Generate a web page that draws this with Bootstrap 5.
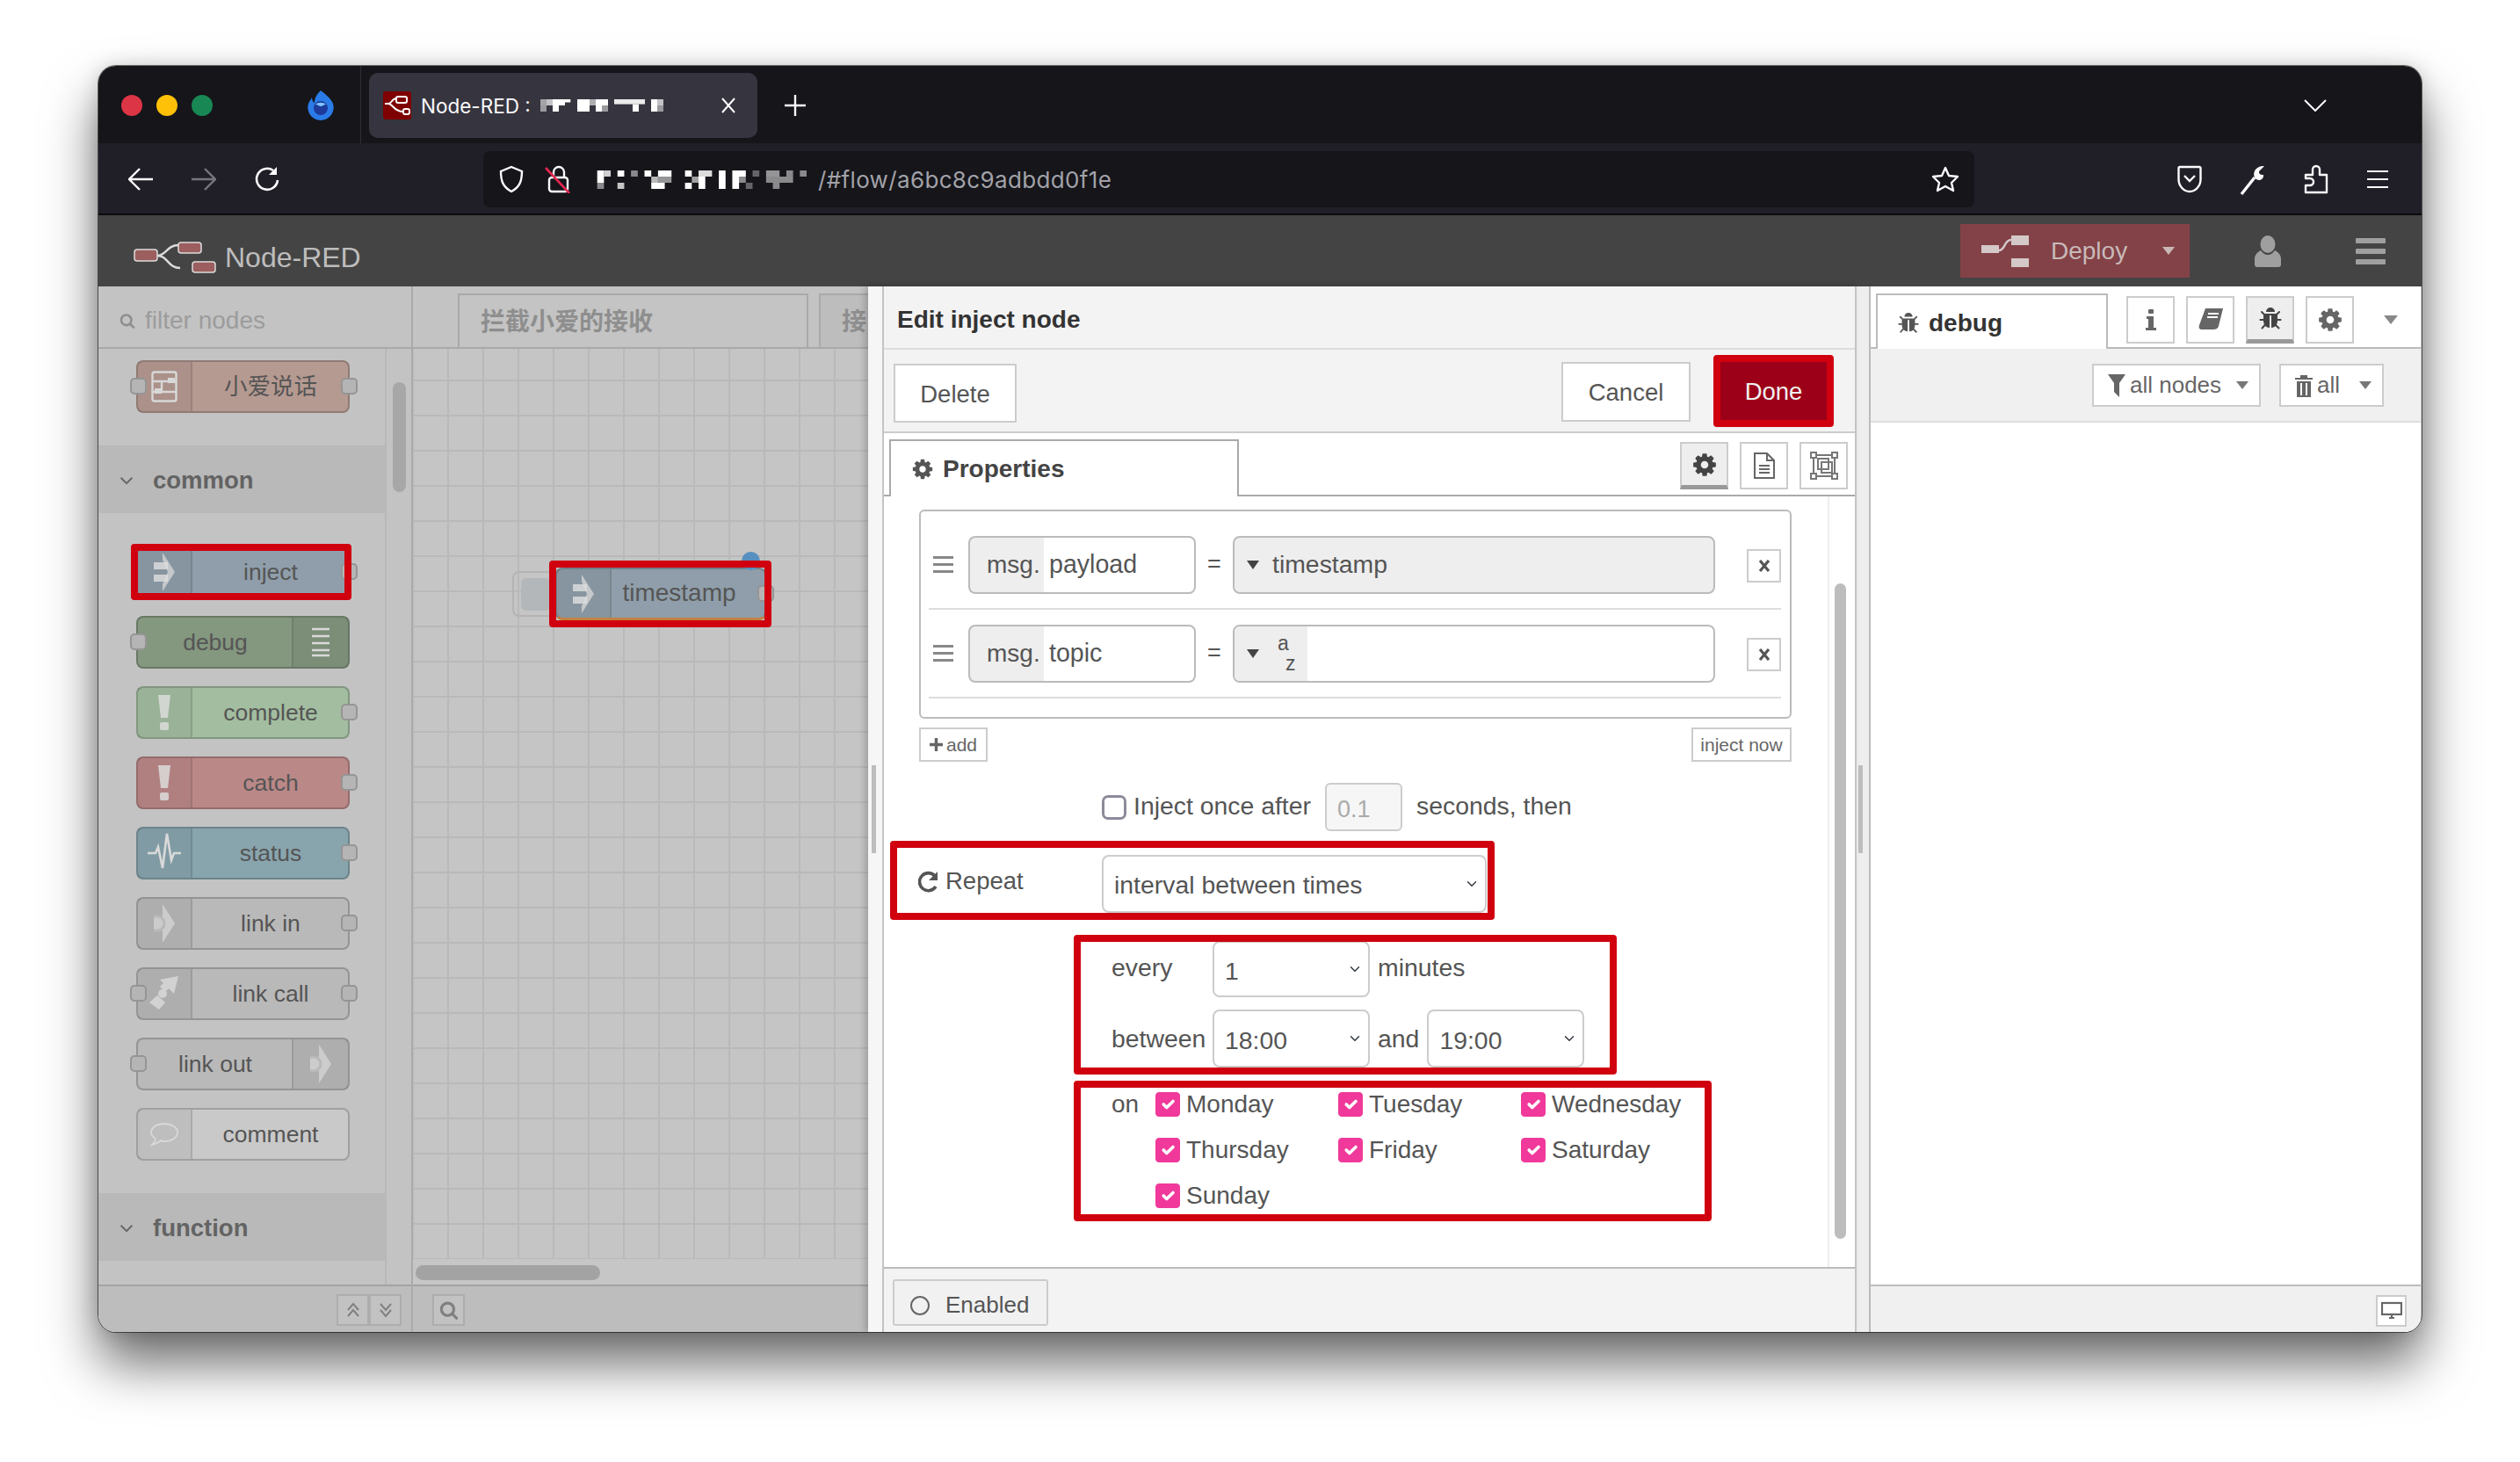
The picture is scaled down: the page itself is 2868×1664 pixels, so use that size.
<!DOCTYPE html>
<html lang="en">
<head>
<meta charset="utf-8">
<title>Node-RED</title>
<link rel="stylesheet" href="https://cdn.jsdelivr.net/npm/bootstrap@5.3.0/dist/css/bootstrap.min.css">
<script src="https://cdn.jsdelivr.net/npm/bootstrap@5.3.0/dist/js/bootstrap.bundle.min.js"></script>
<style>
html,body{height:1664px;overflow:hidden;background:#fff;margin:0}
body{font-family:"Liberation Sans",Arial,"Noto Sans CJK SC",sans-serif;color:#555}
svg{display:block;flex:none}
.fx-win{margin:75px 0 0 112px;width:2644px;height:1441px;border-radius:20px;overflow:hidden;box-shadow:0 0 0 1px rgba(0,0,0,.55),0 36px 60px rgba(0,0,0,.58),0 0 22px rgba(0,0,0,.16);background:#ccc}
.fx-tabbar{height:88px;background:#15151a;padding-top:2px;flex:none}
.fx-lights{padding-left:26px;gap:16px;width:238px}
.fx-light{width:24px;height:24px;border-radius:50%}
.fx-ff{margin-right:30px}
.fx-divider{width:1px;height:88px;background:#2e2e34;margin-right:9px;margin-top:-2px}
.fx-tab{width:442px;height:74px;margin-top:6px;align-self:flex-start;background:#36353f;border-radius:10px;color:#fbfbfe;font:22.5px Inter,"Liberation Sans",sans-serif;padding:0 24px 0 16px;gap:11px}
.fx-fav{width:32px;height:32px;background:#7e0000;border-radius:3px}
.fx-plus{margin-left:30px}
.fx-endpad{width:108px;flex:none}
.fx-toolbar{height:82px;background:#201f28;border-bottom:2px solid #0b0b0d;padding-top:2px;flex:none}
.fx-navs{width:438px;padding-left:34px;gap:44px}
.fx-url{width:1697px;height:64px;background:#15151a;border-radius:8px;padding:0 17px 0 18px;font:26px Inter,"Liberation Sans",sans-serif;color:#a2a2a8}
.fx-shield{margin-right:24px}
.fx-mosu{margin-left:22px}
.fx-urltxt{margin-left:13px;letter-spacing:.35px}
.fx-tools{gap:43px;padding-left:231px}
.nr-head{height:81px;background:#444;color:#bdbdbd;flex:none}
.nr-brand{font-size:32px;gap:10px;padding-left:40px;margin-top:15px}
.nr-deploy{width:261px;height:61px;background:#834247;color:#c8b9b9;font-size:28px;padding-left:24px}
.nr-deploy-txt{margin-left:25px}
.nr-user{margin-left:74px;margin-right:85px}
.nr-menu{margin-right:41px}
.nr-main{height:1190px;flex:none}
.nr-pal{width:358px;background:#c3c3c3;border-right:2px solid #aaa;flex:none}
.nr-filter{height:71px;border-bottom:2px solid #a9a9a9;padding:9px 0 0 24px;gap:11px;font-size:28px;color:#9c9c9c;flex:none}
.nr-filter svg{color:#8f8f8f}
.nr-palbody{height:1065px;flex:none}
.nr-pallist{width:328px;border-right:2px solid #b8b8b8;padding-top:13px;flex:none}
.nr-saywrap{padding-left:43px;margin-bottom:37px}
.nr-paltrack{flex:1;padding:38px 0 0 7px}
.nr-thumb{width:15px;height:125px;background:#a7a7a7;border-radius:8px}
.nr-palhead{height:77px;background:#b9b9b9;font-weight:700;font-size:27.5px;color:#636363;padding:3px 0 0 24px;gap:22px}
.nr-palhead svg{color:#666}
.nr-palgrp{padding:37px 0 37px 43px}
.nr-foot{height:54px;flex:none;border-top:2px solid #a3a3a3;background:#bdbdbd;padding-top:9px}
.nr-pf{padding-right:11px}
.nr-wf{padding-left:22px}
.nr-fbtn{width:37px;height:36px;border:2px solid #adadad;background:#c2c2c2;color:#808080}
.nr-node{position:relative;width:243px;height:60px;border-radius:8px;border:2px solid rgba(0,0,0,.2);font-size:26.5px;color:#555;line-height:1}
.nr-palgrp .nr-node{margin-bottom:20px}
.nr-palgrp .nr-node:last-child{margin-bottom:0}
.nr-ico{width:62px;background:rgba(0,0,0,.055);border-right:2px solid rgba(0,0,0,.1);color:rgba(222,222,222,.82);flex:none}
.nr-ico-r{width:64px;border-right:0;border-left:2px solid rgba(0,0,0,.1)}
.nr-lbl{flex:1;text-align:center;padding:1px 0 0 1px}
.nr-port{position:absolute;width:19px;height:19px;top:18px;background:#b5b5b5;border:2px solid #959595;border-radius:5px}
.nr-port-r{right:-11px}
.nr-port-l{left:-9px}
.c-say{background:#b59a91}
.c-inj{background:#8f9eaa}
.c-dbg{background:#84977f}
.c-cmp{background:#a3bda0}
.c-cat{background:#bb8888}
.c-sta{background:#88a5ae}
.c-lnk{background:#b9b9b9}
.c-com{background:#c9c9c9}
.nr-hl{position:absolute;border:8px solid #d0000f;border-radius:4px;z-index:3}
.nr-hl-inj{left:-8px;right:-4px;top:-4px;bottom:-4px}
.nr-ws{width:518px;background:#c3c3c3;flex:none}
.nr-wstabs{height:71px;flex:none;border-bottom:2px solid #a9a9a9;padding-left:51px;overflow:hidden;gap:12px;font-size:28px;font-weight:700;color:#8e8e8e}
.nr-wstab{height:63px;margin-top:8px;width:399px;border:2px solid #a9a9a9;border-bottom:0;padding:0 0 0 24px;background:#c4c4c4;flex:none;white-space:nowrap}
.nr-wstab2{width:70px;background:#bdbdbd}
.nr-canvas{height:1036px;position:relative;background-color:#c5c5c5;background-image:linear-gradient(90deg,#b9b9b9 2px,transparent 2px),linear-gradient(#b9b9b9 2px,transparent 2px);background-size:40px 40px;background-position:-1px 35px;flex:none}
.nr-wsnode{position:absolute;left:162px;top:249px;width:240px;border-bottom:3px solid #c5803f}
.nr-wslbl{padding:0 20px 2px 0;font-size:28px}
.nr-hl-ws{left:-9px;right:-8px;top:-10px;bottom:-11px}
.nr-injbtn{position:absolute;left:-51px;top:2px;width:46px;height:52px;border:2px solid #b4b4b4;border-right:0;border-radius:8px 0 0 8px;padding:6px 0 0 8px}
.nr-injbtn i{display:block;width:34px;height:37px;border-radius:6px;background:#b3b7ba}
.nr-dot{position:absolute;left:210px;top:-20px;width:21px;height:21px;border-radius:50%;background:#5790bf}
.nr-hbar{height:29px;flex:none;background:#c6c6c6;padding:7px 0 0 3px}
.nr-hthumb{width:210px;height:17px;border-radius:9px;background:#a3a3a3}
.nr-tray{width:1123px;background:#f6f6f6;box-shadow:-3px 0 8px rgba(0,0,0,.22);position:relative;flex:none}
.nr-strip{width:16px;flex:none}
.nr-grip{width:5px;height:100px;background:#bdbdbd;margin-left:4px}
.nr-traybody{flex:1;min-width:0;border-left:2px solid #c4c4c4;background:#fff}
.nr-title{height:72px;background:#f3f3f3;border-bottom:2px solid #ddd;font-size:28px;font-weight:700;color:#333;padding:5px 0 0 15px;flex:none}
.nr-actions{height:95px;background:#f3f3f3;border-bottom:2px solid #ccc;padding:0 24px 0 11px;flex:none}
.nr-btn{border:2px solid #ccc;border-radius:0;background:#fff;color:#555;font-size:27.5px;padding:2px 0 0;display:flex;align-items:center;justify-content:center}
.nr-del{width:140px;height:67px;margin-top:6px}
.nr-can{width:147px;height:68px;margin-right:26px;margin-top:3px}
.nr-done{width:137px;height:82px;background:#9c0018;border:8px solid #d0000f;border-radius:4px;color:#f1f1f1}
.nr-edtabs{height:72px;border-bottom:2px solid #aaa;flex:none;padding-right:8px}
.nr-edtab{width:398px;height:65px;margin:7px 0 -2px 6px;border:2px solid #aaa;border-bottom:0;background:#fff;font-size:28px;font-weight:700;color:#444;padding-left:23px;gap:10px}
.nr-edtab svg{color:#555}
.nr-ibtns{gap:13px;margin-top:10px;align-self:flex-start}
.nr-ibtn{width:55px;height:54px;border:2px solid #ccc;background:#fff;color:#666}
.nr-ibtn-on{background:#eee;border-bottom:5px solid #999;color:#444}
.nr-content{height:877px;flex:none}
.nr-form{width:1074px;padding:15px 0 0 40px;flex:none;font-size:28.4px}
.nr-sb{flex:1;border-left:2px solid #eee;padding:99px 0 0 6px}
.nr-sbthumb{width:13px;height:746px;background:#bdbdbd;border-radius:7px}
.nr-list{width:993px;height:238px;border:2px solid #bbb;border-radius:6px;padding-top:11px}
.nr-prow{height:101px;margin:0 10px 0 9px;border-bottom:2px solid #ddd;padding-left:5px}
.nr-hand{width:23px;margin-right:17px;color:#888}
.nr-field{width:259px;height:66px;flex-wrap:nowrap}
.nr-field .input-group-text{width:87px;background:#eee;border:2px solid #bbb;border-right:0;border-radius:8px 0 0 8px;color:#555;font-size:28px;padding:0 0 0 19px}
.nr-field .form-control{border:2px solid #bbb;border-left:0;border-radius:0 8px 8px 0;font-size:28.6px;color:#555;padding:0 0 0 6px;box-shadow:none}
.nr-eq{width:42px;text-align:center;font-size:27px}
.nr-val{width:549px;height:66px;border:2px solid #bbb;border-radius:8px;background:#eee;overflow:hidden}
.nr-val-w{background:#fff}
.nr-caret{width:0;height:0;border-style:solid;border-width:10px 7px 0;border-color:#444 transparent transparent;margin:0 15px 0 14px;flex:none}
.nr-az{width:83px;height:100%;background:#eee;flex:none}
.nr-azt{font-size:23px;line-height:1;margin-left:6px;width:24px;height:46px;position:relative}
.nr-azt span{position:absolute}
.nr-azt span:first-child{left:0;top:0}
.nr-azt span:last-child{left:9px;bottom:0}
.nr-x{width:39px;height:38px;margin-left:36px;border:2px solid #ccc;color:#555;background:#fff;margin-top:3px}
.nr-addrow{width:993px;margin-top:10px}
.nr-small{height:39px;border:2px solid #ccc;background:#fff;font-size:21px;color:#666}
.nr-add{width:78px;gap:4px}
.nr-now{width:114px}
.nr-once{margin:24px 0 0 208px;height:55px}
.nr-once>span:not(.nr-num){margin-top:-2px}
.nr-cb{width:28px;height:28px;margin:0 8px 0 0;border:3px solid #8b8b9b;border-radius:4px;flex:none}
.nr-num{width:88px;height:55px;margin:0 16px;background:#f6f6f6;border:2px solid #ccc;border-radius:6px;color:#aaa;font-size:27px;padding:8px 0 0 12px}
.nr-box{border:8px solid #d0000f;border-radius:4px}
.nr-box1{width:688px;height:90px;margin:11px 0 0 -33px;padding-left:24px}
.nr-rep{width:209px;gap:8px;margin-top:2px;font-size:27.5px}
.nr-sel{border:2px solid #ccc;border-radius:8px;font-size:28.4px;color:#555;padding:4px 24px 0 12px;background-position:right 8px center;background-size:14px 12px;box-shadow:none}
.nr-sel1{width:438px;height:66px;margin-top:7px}
.nr-box2{width:618px;height:159px;margin:17px 0 0 176px;padding-left:35px;overflow:hidden}
.nr-line1{height:64px;margin-top:-1px}
.nr-line1>span{margin-top:-3px}
.nr-line2{height:66px;margin-top:14px}
.nr-lab{width:115px}
.nr-sel2{width:179px;height:100%}
.nr-mid{margin:0 9px}
.nr-box3{width:726px;height:160px;margin:7px 0 0 176px;padding:2px 0 0 35px;font-size:28px}
.nr-daygrid{display:grid;grid-template-columns:50px 208px 208px 208px;grid-auto-rows:34px;row-gap:18px}
.nr-day{gap:7px}
.nr-day .form-check-input{width:28px;height:28px;margin:0;background-color:#f0399a;border-color:#f0399a;border-radius:4px;flex:none;background-size:24px}
.nr-edfoot{height:74px;flex:none;border-top:2px solid #bbb;background:#f3f3f3;padding:12px 0 0 10px}
.nr-en{width:177px;height:53px;border:2px solid #ccc;border-radius:3px;background:#f1f1f1;font-size:26px;color:#555;gap:18px;padding:6px 0 0 18px}
.nr-ring{width:22px;height:22px;border-radius:50%;border:2px solid #666;flex:none}
.nr-sep{width:16px;background:#eee;border-left:2px solid #ccc;flex:none}
.nr-sep .nr-grip{margin-left:2px}
.nr-side{width:628px;background:#fff;border-left:2px solid #bbb;flex:none}
.nr-sdtabs{height:71px;border-bottom:2px solid #bbb;padding-left:6px;flex:none}
.nr-sdtab{width:264px;height:65px;margin:8px 0 -2px 0;align-self:flex-start;border:2px solid #bbb;border-bottom:0;background:#fff;font-size:28px;font-weight:700;color:#333;padding-left:22px;gap:10px;flex:none}
.nr-sdtab svg{color:#555}
.nr-sdbtns{gap:13px;margin-left:21px;align-self:flex-start;margin-top:11px}
.nr-sdbar{height:84px;background:#f0f0f0;border-bottom:2px solid #ddd;padding:17px 42px 0 0;gap:21px;flex:none}
.nr-sdb{height:49px;border:2px solid #ccc;background:#fff;font-size:26px;color:#666;padding-left:16px;gap:5px}
.nr-sdb1{width:192px}
.nr-sdb2{width:119px}
.nr-tr{width:0;height:0;border-style:solid;border-width:9px 7px 0;border-color:#777 transparent transparent;margin-left:auto;margin-right:12px}
.nr-tr-dep{margin-right:17px;border-color:#c9b8b8 transparent transparent}
.nr-tr-sd{margin:0 0 0 21px;border-width:10px 8px 0;border-color:#888 transparent transparent}
.nr-sdbody{height:981px;flex:none;background:#fff}
.nr-sdfoot{height:54px;flex:none;border-top:2px solid #bbb;background:#f0f0f0;padding:10px 16px 0 0}
.nr-sdmon{width:35px;height:36px;border:2px solid #ccc;background:#fff;color:#666}
.nr-defs{position:absolute}
</style>
</head>
<body>
<svg width="0" height="0" class="nr-defs">
<defs>
<symbol id="i-gear" viewBox="0 0 1792 1792"><path fill="currentColor" d="M1152 896q0-106-75-181t-181-75-181 75-75 181 75 181 181 75 181-75 75-181zm512-109v222q0 12-8 23t-20 13l-185 28q-19 54-39 91 35 50 107 138 10 12 10 25t-9 23q-27 37-99 108t-94 71q-12 0-26-9l-138-108q-44 23-91 38-16 136-29 186-7 28-36 28h-222q-14 0-24.5-8.5t-11.5-21.5l-28-184q-49-16-90-37l-141 107q-10 9-25 9-14 0-25-11-126-114-165-168-7-10-7-23 0-12 8-23 15-21 51-66.5t54-70.5q-27-50-41-99l-183-27q-13-2-21-12.5t-8-23.5v-222q0-12 8-23t19-13l186-28q14-46 39-92-40-57-107-138-10-12-10-24 0-10 9-23 26-36 98.5-107.5t94.5-71.5q13 0 26 10l138 107q44-23 91-38 16-136 29-186 7-28 36-28h222q14 0 24.5 8.5t11.5 21.5l28 184q49 16 90 37l142-107q9-9 24-9 13 0 25 10 129 119 165 170 7 8 7 22 0 12-8 23-15 21-51 66.5t-54 70.5q26 50 41 98l183 28q13 2 21 12.5t8 23.5z"/></symbol>
<symbol id="i-bug" viewBox="0 0 1792 1792"><path fill="currentColor" d="M1696 960q0 26-19 45t-45 19h-224q0 171-67 290l208 209q19 19 19 45t-19 45q-18 19-45 19t-45-19l-198-197q-5 5-15 13t-42 28.5-65 36.5-82 29-97 13v-896h-128v896q-51 0-101.5-13.5t-87-33-66-39-43.5-32.5l-15-14-183 207q-20 21-48 21-24 0-43-16-19-18-20.5-44.5t15.5-46.5l202-227q-58-114-58-274h-224q-26 0-45-19t-19-45 19-45 45-19h224v-294l-173-173q-19-19-19-45t19-45 45-19 45 19l173 173h844l173-173q19-19 45-19t45 19 19 45-19 45l-173 173v294h224q26 0 45 19t19 45zm-480-576h-640q0-133 93.5-226.5t226.5-93.5 226.5 93.5 93.5 226.5z"/></symbol>
<symbol id="i-search" viewBox="0 0 1792 1792"><path fill="currentColor" d="M1216 832q0-185-131.5-316.5t-316.5-131.5-316.5 131.5-131.5 316.5 131.5 316.5 316.5 131.5 316.5-131.5 131.5-316.5zm512 832q0 52-38 90t-90 38q-54 0-90-38l-343-342q-179 124-399 124-143 0-273.5-55.5t-225-150-150-225-55.5-273.5 55.5-273.5 150-225 225-150 273.5-55.5 273.5 55.5 225 150 150 225 55.5 273.5q0 220-124 399l343 343q37 37 37 90z"/></symbol>
<symbol id="i-inj" viewBox="0 0 24 44"><rect x="0" y="11" width="16" height="8" fill="currentColor"/><rect x="0" y="25" width="16" height="8" fill="currentColor"/><polygon points="10,0 24,22 10,44 10,36 16,22 10,8" fill="currentColor" opacity=".85"/></symbol>
<symbol id="i-link" viewBox="0 0 24 44"><polygon points="10,0 24,22 10,44 10,30 0,30 0,14 10,14" fill="currentColor" opacity=".75"/><path d="M0 14h4a8 8 0 0 1 0 16h-4" fill="none" stroke="#b9b9b9" stroke-width="3"/></symbol>
<symbol id="i-ex" viewBox="0 0 14 40"><polygon points="0,0 14,0 11,26 3,26" fill="currentColor"/><rect x="2" y="31" width="10" height="9" rx="2" fill="currentColor"/></symbol>
<symbol id="i-chev" viewBox="0 0 20 12"><polyline points="2,2 10,10 18,2" fill="none" stroke="currentColor" stroke-width="2.4"/></symbol>
</defs>
</svg>

<div class="fx-win d-flex flex-column">
  <!-- browser tab strip -->
  <div class="fx-tabbar d-flex align-items-center">
    <div class="fx-lights d-flex align-items-center">
      <span class="fx-light bg-danger"></span>
      <span class="fx-light bg-warning"></span>
      <span class="fx-light bg-success"></span>
    </div>
    <svg class="fx-ff" width="30" height="34" viewBox="0 0 30 34"><path d="M15 0c5 4 11 8 14 15 3 9-4 19-14 19S-2 24 1 15c1-3 3-5 4-7 0 3 1 5 3 6 0-6 3-10 7-14z" fill="#2a7be8"/><circle cx="15" cy="20" r="8" fill="#1d3a9a"/><path d="M9 16c3-3 9-3 12 0-3 0-4 2-6 2s-3-2-6-2z" fill="#7fc4ff"/></svg>
    <div class="fx-divider"></div>
    <div class="fx-tab d-flex align-items-center">
      <span class="fx-fav d-flex align-items-center justify-content-center">
        <svg width="30" height="24" viewBox="0 0 30 24" fill="none" stroke="#fff" stroke-width="2"><rect x="14" y="2" width="12" height="7" rx="2"/><rect x="22" y="16" width="7" height="6" rx="2"/><path d="M1 10h4c4 0 4-6 9-6M5 10c5 0 6 9 17 9"/></svg>
      </span>
      <span>Node-RED :</span>
      <svg width="140" height="14" viewBox="0 0 20 2" preserveAspectRatio="none">
        <g fill="#fff">
          <rect x="0" y="0" width="1" height="1" opacity=".55"/><rect x="1" y="0" width="1" height="1" opacity=".7"/><rect x="2" y="0" width="1" height="1"/><rect x="3" y="0" width="1" height="1"/><rect x="4" y="0" width=".9" height=".5"/>
          <rect x="6" y="0" width="2" height="2"/><rect x="8" y="0" width="1" height="1" opacity=".6"/><rect x="9" y="0" width="1" height="2"/><rect x="10" y="0" width="1" height="1"/><rect x="10" y="1" width="1" height="1" opacity=".5"/>
          <rect x="12" y="0" width="5" height=".8" opacity=".9"/><rect x="15" y=".8" width="1" height="1.2"/>
          <rect x="18" y="0" width="1" height="2"/><rect x="19" y="0" width="1" height="1" opacity=".7"/><rect x="19" y="1" width="1" height="1" opacity=".5"/>
          <rect x="0" y="1" width="1" height="1" opacity=".5"/><rect x="2" y="1" width="1" height="1"/>
        </g>
      </svg>
      <svg class="ms-auto" width="18" height="20" viewBox="0 0 18 20" fill="none" stroke="#fbfbfe" stroke-width="2"><path d="M2 2l14 16M16 2L2 18"/></svg>
    </div>
    <svg class="fx-plus" width="26" height="26" viewBox="0 0 26 26" stroke="#fbfbfe" stroke-width="2.4"><path d="M13 1v24M1 13h24"/></svg>
    <svg class="ms-auto" width="26" height="14" viewBox="0 0 26 14" fill="none" stroke="#fbfbfe" stroke-width="2"><path d="M1 1l12 12L25 1"/></svg>
    <span class="fx-endpad"></span>
  </div>

  <!-- browser toolbar -->
  <div class="fx-toolbar d-flex align-items-center">
    <div class="fx-navs d-flex align-items-center">
      <svg width="28" height="26" viewBox="0 0 28 26" fill="none" stroke="#fbfbfe" stroke-width="2.4"><path d="M13 1L1 13l12 12M1 13h27"/></svg>
      <svg width="28" height="26" viewBox="0 0 28 26" fill="none" stroke="#77767e" stroke-width="2.4"><path d="M15 1l12 12-12 12M27 13H0"/></svg>
      <svg width="28" height="30" viewBox="0 0 28 30" fill="none" stroke="#fbfbfe" stroke-width="2.6"><path d="M26 16a12 12 0 1 1-5-11"/><path d="M25 1v9h-9" fill="#fbfbfe" stroke="none"/></svg>
    </div>
    <div class="fx-url d-flex align-items-center">
      <svg class="fx-shield" width="28" height="32" viewBox="0 0 28 32" fill="none" stroke="#fbfbfe" stroke-width="2.4"><path d="M14 2l12 5c0 12-3 18-12 23C5 25 2 19 2 7z"/></svg>
      <svg width="30" height="32" viewBox="0 0 30 32" fill="none"><path d="M10 14V8a6 6 0 0 1 12 0v6" stroke="#fbfbfe" stroke-width="2.4"/><rect x="5" y="14" width="21" height="16" rx="3" stroke="#fbfbfe" stroke-width="2.4"/><path d="M1 3l27 29" stroke="#e22850" stroke-width="2.6"/></svg>
      <svg class="fx-mosu" width="246" height="21" viewBox="0 0 32 3" preserveAspectRatio="none">
        <g fill="#fff">
          <rect x="1" y="0" width="1" height="1"/><rect x="2" y="0" width="1" height="1" opacity=".8"/><rect x="4" y="0" width="1" height="1"/><rect x="6" y="0" width="1" height="1" opacity=".5"/><rect x="8" y="0" width="1" height="1"/><rect x="10" y="0" width="2" height="1"/><rect x="14" y="0" width="1" height="1"/><rect x="16" y="0" width="2" height="1" opacity=".85"/><rect x="19" y="0" width="1" height="1"/><rect x="21" y="0" width="2" height="1"/><rect x="24" y="0" width="1" height="1" opacity=".35"/><rect x="26" y="0" width="2" height="1" opacity=".55"/><rect x="29" y="0" width="1" height="1" opacity=".5"/><rect x="31" y="0" width="1" height="1" opacity=".5"/>
          <rect x="1" y="1" width="1" height="1"/><rect x="9" y="1" width="1" height="1" opacity=".7"/><rect x="10" y="1" width="2" height="1" opacity=".55"/><rect x="15" y="1" width="1" height="1" opacity=".6"/><rect x="16" y="1" width="1" height="1"/><rect x="19" y="1" width="1" height="1"/><rect x="21" y="1" width="1" height="1"/><rect x="22" y="1" width="1" height="1" opacity=".5"/><rect x="26" y="1" width="4" height="1" opacity=".5"/>
          <rect x="1" y="2" width="1" height="1" opacity=".5"/><rect x="4" y="2" width="1" height="1" opacity=".75"/><rect x="9" y="2" width="2" height="1"/><rect x="14" y="2" width="1" height="1"/><rect x="16" y="2" width="1" height="1"/><rect x="19" y="2" width="1" height="1"/><rect x="21" y="2" width="1" height="1"/><rect x="23" y="2" width="1" height="1" opacity=".35"/><rect x="27" y="2" width="1" height="1" opacity=".5"/>
        </g>
      </svg>
      <span class="fx-urltxt">/#flow/a6bc8c9adbdd0f1e</span>
      <svg class="ms-auto" width="32" height="30" viewBox="0 0 32 30" fill="none" stroke="#fbfbfe" stroke-width="2.4"><path d="M16 2l4 9 10 1-7 7 2 9-9-5-9 5 2-9-7-7 10-1z" stroke-linejoin="round"/></svg>
    </div>
    <div class="fx-tools d-flex align-items-center">
      <svg width="28" height="32" viewBox="0 0 28 32" fill="none" stroke="#fbfbfe" stroke-width="2.4"><path d="M3 2h22a1.500 1.500 0 0 1 1.500 1.500V16c0 8-6 14-12.500 14S1.500 24 1.500 16V3.500A1.500 1.500 0 0 1 3 2z"/><path d="M8 12l6 6 6-6"/></svg>
      <svg width="30" height="38" viewBox="0 0 30 38" fill="none" stroke="#fbfbfe" stroke-width="3.4"><path d="M2 36l15-19"/><path d="M17 17c-3-7 3-14 11-13l-6 6c0 3 1 4 5 4 1 5-6 9-10 3z" fill="#fbfbfe" stroke="none"/></svg>
      <svg width="28" height="34" viewBox="0 0 28 34" fill="none" stroke="#fbfbfe" stroke-width="2.4"><path d="M2 12h8V6a4 4 0 0 1 8 0v6h8v20H2v-8h5a4 4 0 0 0 0-8H2z" stroke-linejoin="round"/></svg>
      <svg width="26" height="22" viewBox="0 0 26 22" stroke="#fbfbfe" stroke-width="2.2"><path d="M1 2h24M1 11h24M1 20h24"/></svg>
    </div>
  </div>

  <!-- node-red header -->
  <div class="nr-head d-flex align-items-center">
    <div class="nr-brand d-flex align-items-center">
      <svg width="94" height="36" viewBox="0 0 94 36" fill="none"><path d="M27 16c10 0 11-12 24-12M27 16c12 0 12 14 26 14" stroke="#dcdcdc" stroke-width="2.4"/><rect x="1" y="9" width="26" height="13" rx="3" fill="#9c5e5e" stroke="#dcdcdc" stroke-width="1.500"/><rect x="51" y="1" width="26" height="12" rx="3" fill="#9c5e5e" stroke="#dcdcdc" stroke-width="1.500"/><rect x="67" y="23" width="26" height="12" rx="3" fill="#9c5e5e" stroke="#dcdcdc" stroke-width="1.500"/></svg>
      <span>Node-RED</span>
    </div>
    <div class="nr-deploy ms-auto d-flex align-items-center">
      <svg width="54" height="36" viewBox="0 0 54 36" fill="#d4c8c8"><rect x="0" y="11" width="20" height="9"/><rect x="34" y="0" width="20" height="11"/><rect x="34" y="26" width="20" height="10"/><path d="M20 17c7 0 6-12 14-12" fill="none" stroke="#d4c8c8" stroke-width="2.500"/></svg>
      <span class="nr-deploy-txt">Deploy</span>
      <span class="nr-tr nr-tr-dep"></span>
    </div>
    <svg class="nr-user" width="30" height="36" viewBox="0 0 30 36" fill="#9f9f9f"><ellipse cx="15" cy="10" rx="8.500" ry="10"/><path d="M7 17c-4 2-7 5-7 10v6a3 3 0 0 0 3 3h24a3 3 0 0 0 3-3v-6c0-5-3-8-7-10-2 3-5 5-8 5s-6-2-8-5z"/></svg>
    <svg class="nr-menu" width="34" height="30" viewBox="0 0 34 30" fill="#9f9f9f"><rect y="0" width="34" height="6" rx="1"/><rect y="12" width="34" height="6" rx="1"/><rect y="24" width="34" height="6" rx="1"/></svg>
  </div>

  <!-- main -->
  <div class="nr-main d-flex">
    <!-- palette -->
    <div class="nr-pal d-flex flex-column">
      <div class="nr-filter d-flex align-items-center">
        <svg width="18" height="18"><use href="#i-search"/></svg>
        <span>filter nodes</span>
      </div>
      <div class="nr-palbody d-flex">
        <div class="nr-pallist">
          <div class="nr-saywrap">
            <div class="nr-node d-flex align-items-center c-say">
              <div class="nr-ico h-100 d-flex align-items-center justify-content-center">
                <svg width="30" height="36" viewBox="0 0 30 36" fill="none" stroke="#d8d8d8" stroke-width="2.4"><rect x="1.500" y="1.500" width="27" height="33" rx="2"/><path d="M1.500 12h27M1.500 24h27M12 12v12"/><rect x="19" y="8" width="8" height="6" fill="#d8d8d8" stroke="none"/><rect x="4" y="20" width="8" height="6" fill="#d8d8d8" stroke="none"/></svg>
              </div>
              <div class="nr-lbl">小爱说话</div>
              <span class="nr-port nr-port-l"></span><span class="nr-port nr-port-r"></span>
            </div>
          </div>
          <div class="nr-palhead d-flex align-items-center">
            <svg width="16" height="10"><use href="#i-chev"/></svg><span>common</span>
          </div>
          <div class="nr-palgrp">
            <div class="nr-node d-flex align-items-center c-inj">
              <div class="nr-ico h-100 d-flex align-items-center justify-content-center"><svg width="24" height="44"><use href="#i-inj"/></svg></div>
              <div class="nr-lbl">inject</div>
              <span class="nr-port nr-port-r"></span>
              <span class="nr-hl nr-hl-inj"></span>
            </div>
            <div class="nr-node d-flex align-items-center c-dbg">
              <span class="nr-port nr-port-l"></span>
              <div class="nr-lbl">debug</div>
              <div class="nr-ico nr-ico-r h-100 d-flex align-items-center justify-content-center">
                <svg width="20" height="34" viewBox="0 0 20 34" stroke="#d9d9d9" stroke-width="2.400"><path d="M0 2h20M0 10h20M0 18h20M0 26h20M0 32h20"/></svg>
              </div>
            </div>
            <div class="nr-node d-flex align-items-center c-cmp">
              <div class="nr-ico h-100 d-flex align-items-center justify-content-center"><svg width="14" height="40"><use href="#i-ex"/></svg></div>
              <div class="nr-lbl">complete</div>
              <span class="nr-port nr-port-r"></span>
            </div>
            <div class="nr-node d-flex align-items-center c-cat">
              <div class="nr-ico h-100 d-flex align-items-center justify-content-center"><svg width="14" height="40"><use href="#i-ex"/></svg></div>
              <div class="nr-lbl">catch</div>
              <span class="nr-port nr-port-r"></span>
            </div>
            <div class="nr-node d-flex align-items-center c-sta">
              <div class="nr-ico h-100 d-flex align-items-center justify-content-center">
                <svg width="38" height="46" viewBox="0 0 38 46" fill="none" stroke="#d9d9d9" stroke-width="2.600"><path d="M0 23h9l3-7 5 24 5-39 5 30 3-8h8"/></svg>
              </div>
              <div class="nr-lbl">status</div>
              <span class="nr-port nr-port-r"></span>
            </div>
            <div class="nr-node d-flex align-items-center c-lnk">
              <div class="nr-ico h-100 d-flex align-items-center justify-content-center"><svg width="24" height="44"><use href="#i-link"/></svg></div>
              <div class="nr-lbl">link in</div>
              <span class="nr-port nr-port-r"></span>
            </div>
            <div class="nr-node d-flex align-items-center c-lnk">
              <span class="nr-port nr-port-l"></span>
              <div class="nr-ico h-100 d-flex align-items-center justify-content-center">
                <svg width="34" height="40" viewBox="0 0 34 40" fill="#d2d2d2"><polygon points="33,0 28,20 22,14 18,18 12,12 16,8 12,4"/><circle cx="15" cy="20" r="5"/><polygon points="0,30 9,22 18,30 11,38"/></svg>
              </div>
              <div class="nr-lbl">link call</div>
              <span class="nr-port nr-port-r"></span>
            </div>
            <div class="nr-node d-flex align-items-center c-lnk">
              <span class="nr-port nr-port-l"></span>
              <div class="nr-lbl">link out</div>
              <div class="nr-ico nr-ico-r h-100 d-flex align-items-center justify-content-center"><svg width="24" height="44"><use href="#i-link"/></svg></div>
            </div>
            <div class="nr-node d-flex align-items-center c-com">
              <div class="nr-ico h-100 d-flex align-items-center justify-content-center">
                <svg width="32" height="28" viewBox="0 0 32 28" fill="none" stroke="#d8d8d8" stroke-width="1.800"><path d="M16 2c8 0 15 4 15 10s-7 10-15 10c-2 0-3 0-4-1-3 3-6 4-10 5 2-2 4-4 4-7-3-2-5-4-5-7C1 6 8 2 16 2z"/></svg>
              </div>
              <div class="nr-lbl">comment</div>
            </div>
          </div>
          <div class="nr-palhead d-flex align-items-center">
            <svg width="16" height="10"><use href="#i-chev"/></svg><span>function</span>
          </div>
        </div>
        <div class="nr-paltrack"><div class="nr-thumb"></div></div>
      </div>
      <div class="nr-foot nr-pf d-flex align-items-start justify-content-end">
        <span class="nr-fbtn d-flex align-items-center justify-content-center"><svg width="16" height="20" viewBox="0 0 16 20" fill="none" stroke="currentColor" stroke-width="2"><path d="M2 10l6-7 6 7M2 17l6-7 6 7"/></svg></span>
        <span class="nr-fbtn d-flex align-items-center justify-content-center"><svg width="16" height="20" viewBox="0 0 16 20" fill="none" stroke="currentColor" stroke-width="2"><path d="M2 3l6 7 6-7M2 10l6 7 6-7"/></svg></span>
      </div>
    </div>

    <!-- workspace -->
    <div class="nr-ws d-flex flex-column">
      <div class="nr-wstabs d-flex align-items-stretch">
        <div class="nr-wstab d-flex align-items-center">拦截小爱的接收</div>
        <div class="nr-wstab nr-wstab2 d-flex align-items-center">接</div>
      </div>
      <div class="nr-canvas">
        <div class="nr-node nr-wsnode d-flex align-items-center c-inj">
          <span class="nr-injbtn"><i></i></span>
          <span class="nr-dot"></span>
          <div class="nr-ico h-100 d-flex align-items-center justify-content-center"><svg width="24" height="44"><use href="#i-inj"/></svg></div>
          <div class="nr-lbl nr-wslbl">timestamp</div>
          <span class="nr-port nr-port-r"></span>
          <span class="nr-hl nr-hl-ws"></span>
        </div>
      </div>
      <div class="nr-hbar"><div class="nr-hthumb"></div></div>
      <div class="nr-foot nr-wf d-flex align-items-start">
        <span class="nr-fbtn d-flex align-items-center justify-content-center"><svg width="22" height="22"><use href="#i-search"/></svg></span>
      </div>
    </div>

    <!-- editor tray -->
    <div class="nr-tray d-flex">
      <div class="nr-strip d-flex align-items-center"><div class="nr-grip"></div></div>
      <div class="nr-traybody d-flex flex-column">
        <div class="nr-title d-flex align-items-center">Edit inject node</div>
        <div class="nr-actions d-flex align-items-center">
          <button type="button" class="btn nr-btn nr-del">Delete</button>
          <button type="button" class="btn nr-btn nr-can ms-auto">Cancel</button>
          <button type="button" class="btn nr-btn nr-done">Done</button>
        </div>
        <div class="nr-edtabs d-flex align-items-end">
          <div class="nr-edtab d-flex align-items-center">
            <svg width="26" height="26"><use href="#i-gear"/></svg><span>Properties</span>
          </div>
          <div class="nr-ibtns d-flex ms-auto">
            <span class="nr-ibtn nr-ibtn-on d-flex align-items-center justify-content-center"><svg width="30" height="30"><use href="#i-gear"/></svg></span>
            <span class="nr-ibtn d-flex align-items-center justify-content-center">
              <svg width="24" height="30" viewBox="0 0 24 30" fill="none" stroke="#666" stroke-width="2"><path d="M1 1h14l8 8v20H1zM15 1v8h8M6 15h12M6 19h12M6 23h12"/></svg>
            </span>
            <span class="nr-ibtn d-flex align-items-center justify-content-center">
              <svg width="32" height="32" viewBox="0 0 32 32" fill="none" stroke="#777" stroke-width="2"><rect x="4" y="4" width="24" height="24"/><rect x="9" y="8" width="12" height="12"/><rect x="13" y="12" width="12" height="12"/><rect x="1" y="1" width="6" height="6" fill="#fff"/><rect x="25" y="1" width="6" height="6" fill="#fff"/><rect x="1" y="25" width="6" height="6" fill="#fff"/><rect x="25" y="25" width="6" height="6" fill="#fff"/></svg>
            </span>
          </div>
        </div>
        <div class="nr-content d-flex">
          <div class="nr-form">
            <div class="nr-list">
              <div class="nr-prow d-flex align-items-center">
                <svg class="nr-hand" width="23" height="20" viewBox="0 0 23 20" fill="currentColor"><rect width="23" height="3"/><rect y="8" width="23" height="3"/><rect y="16" width="23" height="3"/></svg>
                <div class="input-group nr-field">
                  <span class="input-group-text">msg.</span>
                  <input type="text" class="form-control" value="payload">
                </div>
                <span class="nr-eq">=</span>
                <div class="nr-val d-flex align-items-center"><span class="nr-caret"></span><span>timestamp</span></div>
                <span class="nr-x d-flex align-items-center justify-content-center"><svg width="12" height="14" viewBox="0 0 12 14" stroke="#555" stroke-width="3.200"><path d="M1 1l10 12M11 1L1 13"/></svg></span>
              </div>
              <div class="nr-prow d-flex align-items-center">
                <svg class="nr-hand" width="23" height="20" viewBox="0 0 23 20" fill="currentColor"><rect width="23" height="3"/><rect y="8" width="23" height="3"/><rect y="16" width="23" height="3"/></svg>
                <div class="input-group nr-field">
                  <span class="input-group-text">msg.</span>
                  <input type="text" class="form-control" value="topic">
                </div>
                <span class="nr-eq">=</span>
                <div class="nr-val nr-val-w d-flex align-items-center">
                  <div class="nr-az d-flex align-items-center"><span class="nr-caret"></span><span class="nr-azt"><span>a</span><span>z</span></span></div>
                </div>
                <span class="nr-x d-flex align-items-center justify-content-center"><svg width="12" height="14" viewBox="0 0 12 14" stroke="#555" stroke-width="3.200"><path d="M1 1l10 12M11 1L1 13"/></svg></span>
              </div>
            </div>
            <div class="nr-addrow d-flex justify-content-between">
              <span class="nr-small nr-add d-flex align-items-center justify-content-center"><svg width="15" height="15" viewBox="0 0 15 15" stroke="#666" stroke-width="3.400"><path d="M7.500 0v15M0 7.500h15"/></svg>add</span>
              <span class="nr-small nr-now d-flex align-items-center justify-content-center">inject now</span>
            </div>
            <div class="nr-once d-flex align-items-center">
              <input class="form-check-input nr-cb" type="checkbox">
              <span>Inject once after</span>
              <span class="nr-num">0.1</span>
              <span>seconds, then</span>
            </div>
            <div class="nr-box nr-box1 d-flex align-items-center">
              <div class="nr-rep d-flex align-items-center">
                <svg width="23" height="26" viewBox="0 0 23 26" fill="none" stroke="#555" stroke-width="3.600"><path d="M20 19a10 10 0 1 1-1-12"/><path d="M22 2v10H12z" fill="#555" stroke="none"/></svg>
                <span>Repeat</span>
              </div>
              <select class="form-select nr-sel nr-sel1"><option>interval between times</option></select>
            </div>
            <div class="nr-box nr-box2">
              <div class="nr-line1 d-flex align-items-center">
                <span class="nr-lab">every</span>
                <select class="form-select nr-sel nr-sel2"><option>1</option></select>
                <span class="nr-mid">minutes</span>
              </div>
              <div class="nr-line2 d-flex align-items-center">
                <span class="nr-lab">between</span>
                <select class="form-select nr-sel nr-sel2"><option>18:00</option></select>
                <span class="nr-mid">and</span>
                <select class="form-select nr-sel nr-sel2"><option>19:00</option></select>
              </div>
            </div>
            <div class="nr-box nr-box3">
              <div class="nr-daygrid">
                <span class="d-flex align-items-center">on</span>
                <label class="nr-day d-flex align-items-center"><input class="form-check-input" type="checkbox" checked>Monday</label>
                <label class="nr-day d-flex align-items-center"><input class="form-check-input" type="checkbox" checked>Tuesday</label>
                <label class="nr-day d-flex align-items-center"><input class="form-check-input" type="checkbox" checked>Wednesday</label>
                <span></span>
                <label class="nr-day d-flex align-items-center"><input class="form-check-input" type="checkbox" checked>Thursday</label>
                <label class="nr-day d-flex align-items-center"><input class="form-check-input" type="checkbox" checked>Friday</label>
                <label class="nr-day d-flex align-items-center"><input class="form-check-input" type="checkbox" checked>Saturday</label>
                <span></span>
                <label class="nr-day d-flex align-items-center"><input class="form-check-input" type="checkbox" checked>Sunday</label>
              </div>
            </div>
          </div>
          <div class="nr-sb"><div class="nr-sbthumb"></div></div>
        </div>
        <div class="nr-edfoot">
          <div class="nr-en d-flex align-items-center"><span class="nr-ring"></span><span>Enabled</span></div>
        </div>
      </div>
    </div>

    <div class="nr-sep d-flex align-items-center"><div class="nr-grip"></div></div>

    <!-- sidebar -->
    <div class="nr-side d-flex flex-column">
      <div class="nr-sdtabs d-flex align-items-end">
        <div class="nr-sdtab d-flex align-items-center"><svg width="26" height="26"><use href="#i-bug"/></svg><span>debug</span></div>
        <div class="nr-sdbtns d-flex align-items-center">
          <span class="nr-ibtn d-flex align-items-center justify-content-center"><svg width="12" height="24" viewBox="0 0 12 24" fill="#666"><rect x="3" width="6" height="5" rx="1"/><path d="M1 8h8v13h3v3H0v-3h3V11H1z"/></svg></span>
          <span class="nr-ibtn d-flex align-items-center justify-content-center"><svg width="28" height="26" viewBox="0 0 28 26" fill="#666"><path d="M8 0h20l-5 20c-1 3-3 4-6 4H4c-3 0-4-2-3-5z"/><path d="M11 6h12M10 10h12" stroke="#fff" stroke-width="1.800"/></svg></span>
          <span class="nr-ibtn nr-ibtn-on d-flex align-items-center justify-content-center"><svg width="28" height="28"><use href="#i-bug"/></svg></span>
          <span class="nr-ibtn d-flex align-items-center justify-content-center"><svg width="30" height="30"><use href="#i-gear"/></svg></span>
          <span class="nr-tr nr-tr-sd"></span>
        </div>
      </div>
      <div class="nr-sdbar d-flex justify-content-end">
        <div class="nr-sdb nr-sdb1 d-flex align-items-center"><svg width="20" height="26" viewBox="0 0 20 26" fill="#666"><path d="M0 0h20L13 10v16l-6-6V10z"/></svg><span>all nodes</span><span class="nr-tr"></span></div>
        <div class="nr-sdb nr-sdb2 d-flex align-items-center"><svg width="20" height="26" viewBox="0 0 20 26" fill="#666"><path d="M0 4h6V1h8v3h6v2H0zM2 8h16v18H2zM6 10v14h2V10zm6 0v14h2V10z" fill-rule="evenodd"/></svg><span>all</span><span class="nr-tr"></span></div>
      </div>
      <div class="nr-sdbody"></div>
      <div class="nr-sdfoot d-flex justify-content-end">
        <span class="nr-sdmon d-flex align-items-center justify-content-center"><svg width="24" height="22" viewBox="0 0 24 22" fill="none" stroke="#666" stroke-width="2.200"><rect x="1" y="2" width="22" height="13"/><path d="M9 19h6M12 15v4"/></svg></span>
      </div>
    </div>
  </div>
</div>
</body>
</html>
